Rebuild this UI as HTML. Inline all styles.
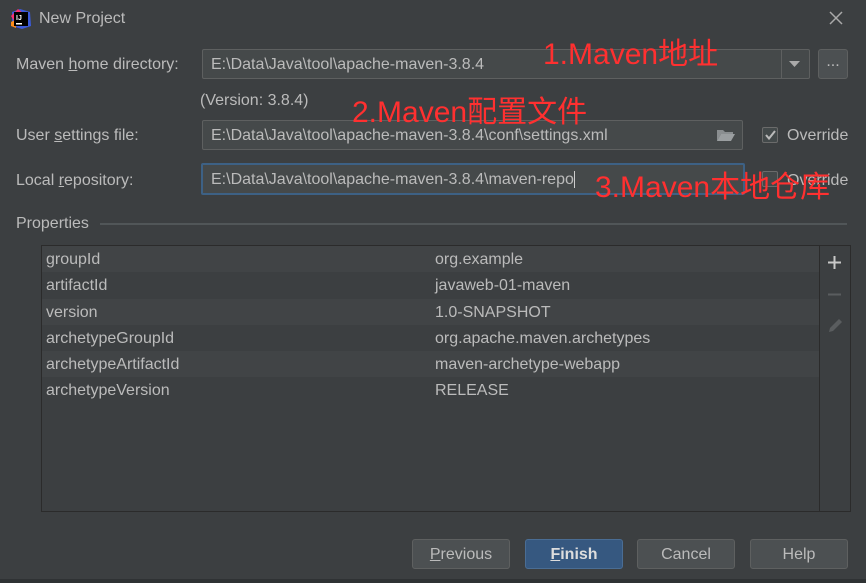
<!DOCTYPE html>
<html><head><meta charset="utf-8"><style>
*{margin:0;padding:0;box-sizing:border-box}
body{width:866px;height:583px;background:#3c3f41;font-family:"Liberation Sans","Noto Sans CJK SC",sans-serif;color:#bbbbbb;font-size:16px;position:relative;overflow:hidden}
.a{position:absolute;white-space:nowrap}
.f{position:absolute;background:#45494a;border:1px solid #5e6060;border-radius:2px;padding-left:8px;line-height:29px;color:#bbbbbb}
.red{position:absolute;color:#ff3030;font-size:30px;white-space:nowrap;font-family:"Liberation Sans","Noto Sans CJK SC",sans-serif}
.btn{position:absolute;top:539px;height:30px;width:98px;border:1px solid #5e6060;border-radius:3px;background:#4c5052;text-align:center;line-height:30px;color:#bbbbbb}
.cb{position:absolute;width:16px;height:16px;border:1px solid #6b6b6b;border-radius:2px;background:#43494a}
.row{position:absolute;left:42px;width:777px;height:26px;line-height:28px}
.row span{position:absolute}
</style></head><body>
<svg class="a" style="left:10px;top:8px" width="22" height="22" viewBox="0 0 22 22"><path d="M2 4 L10 1 L20 4 L21 18 L12 21 L2 18Z" fill="#3b5bdb"/><path d="M1 8 L8 1 L14 6 L6 16Z" fill="#ff2d6e"/><path d="M1 14 L5 12 L6 20 L1 18Z" fill="#ff8c1a"/><rect x="4" y="4" width="14" height="14" fill="#000"/><text x="6" y="12" font-size="7" fill="#fff" font-family="Liberation Sans" font-weight="bold">IJ</text><rect x="6" y="15" width="6" height="1.5" fill="#fff"/></svg>
<div class="a" style="left:39px;top:10px;font-size:16px">New Project</div>
<svg class="a" style="left:829px;top:11px" width="14" height="14"><path d="M1 1L13 13M13 1L1 13" stroke="#aaa" stroke-width="1.5"/></svg>

<div class="a" style="left:16px;top:56px">Maven <u>h</u>ome directory:</div>
<div class="f" style="left:202px;top:49px;width:608px;height:30px">E:\Data\Java\tool\apache-maven-3.8.4</div>
<div class="a" style="left:781px;top:50px;width:1px;height:28px;background:#5e6060"></div>
<svg class="a" style="left:789px;top:61px" width="12" height="7"><path d="M0 0H11L5.5 6Z" fill="#aaa"/></svg>
<div class="a" style="left:818px;top:49px;width:30px;height:30px;border:1px solid #5e6060;border-radius:3px;background:#4c5052;text-align:center;line-height:24px">...</div>
<div class="a" style="left:200px;top:92px">(Version: 3.8.4)</div>

<div class="a" style="left:16px;top:127px">User <u>s</u>ettings file:</div>
<div class="f" style="left:202px;top:120px;width:541px;height:30px">E:\Data\Java\tool\apache-maven-3.8.4\conf\settings.xml</div>
<svg class="a" style="left:716px;top:128px" width="20" height="14"><path d="M1 2H7L9 4H17V6H5L1 13Z" fill="#8a8e90"/><path d="M5 6H19L15 13H1Z" fill="#9a9ea0"/></svg>
<div class="cb" style="left:762px;top:127px"></div>
<svg class="a" style="left:764px;top:129px" width="13" height="12"><path d="M2 6L5 9.5L11 2" stroke="#bbb" stroke-width="2" fill="none"/></svg>
<div class="a" style="left:787px;top:127px">Override</div>

<div class="a" style="left:16px;top:172px">Local <u>r</u>epository:</div>
<div class="f" style="left:201px;top:163px;width:544px;height:32px;border:2px solid #3d6185;line-height:30px;padding-left:8px">E:\Data\Java\tool\apache-maven-3.8.4\maven-repo<span style="display:inline-block;width:1px;height:17px;background:#ccc;vertical-align:middle"></span></div>
<div class="cb" style="left:762px;top:171px"></div>
<div class="a" style="left:787px;top:172px">Override</div>

<div class="red" style="left:543px;top:29px">1.Maven地址</div>
<div class="red" style="left:352px;top:87px">2.Maven配置文件</div>
<div class="red" style="left:595px;top:162px">3.Maven本地仓库</div>

<div class="a" style="left:16px;top:215px">Properties</div>
<div class="a" style="left:100px;top:223px;width:747px;height:2px;background:#515658"></div>

<div class="a" style="left:41px;top:245px;width:810px;height:267px;border:1px solid #2b2b2b;background:#3c3f41"></div>
<div class="a" style="left:819px;top:246px;width:1px;height:265px;background:#2b2b2b"></div>
<div class="row" style="top:246px;background:#414446"><span style="left:4px">groupId</span><span style="left:393px">org.example</span></div>
<div class="row" style="top:272px"><span style="left:4px">artifactId</span><span style="left:393px">javaweb-01-maven</span></div>
<div class="row" style="top:299px;background:#414446"><span style="left:4px">version</span><span style="left:393px">1.0-SNAPSHOT</span></div>
<div class="row" style="top:325px"><span style="left:4px">archetypeGroupId</span><span style="left:393px">org.apache.maven.archetypes</span></div>
<div class="row" style="top:351px;background:#414446"><span style="left:4px">archetypeArtifactId</span><span style="left:393px">maven-archetype-webapp</span></div>
<div class="row" style="top:377px"><span style="left:4px">archetypeVersion</span><span style="left:393px">RELEASE</span></div>
<svg class="a" style="left:827px;top:255px" width="15" height="15"><path d="M7.5 1V14M1 7.5H14" stroke="#c8c8c8" stroke-width="2"/></svg>
<svg class="a" style="left:827px;top:287px" width="15" height="15"><path d="M1 7.5H14" stroke="#5a5d5f" stroke-width="2"/></svg>
<svg class="a" style="left:826px;top:317px" width="18" height="18"><path d="M3 15L4 11L13 2L16 5L7 14Z" fill="#5a5d5f"/></svg>

<div class="btn" style="left:412px"><u>P</u>revious</div>
<div class="btn" style="left:525px;background:#365880;border-color:#4a6d94;color:#dddddd;font-weight:bold"><u>F</u>inish</div>
<div class="btn" style="left:637px">Cancel</div>
<div class="btn" style="left:750px">Help</div>
<div class="a" style="left:0;top:579px;width:866px;height:4px;background:#2f3234"></div>
</body></html>
